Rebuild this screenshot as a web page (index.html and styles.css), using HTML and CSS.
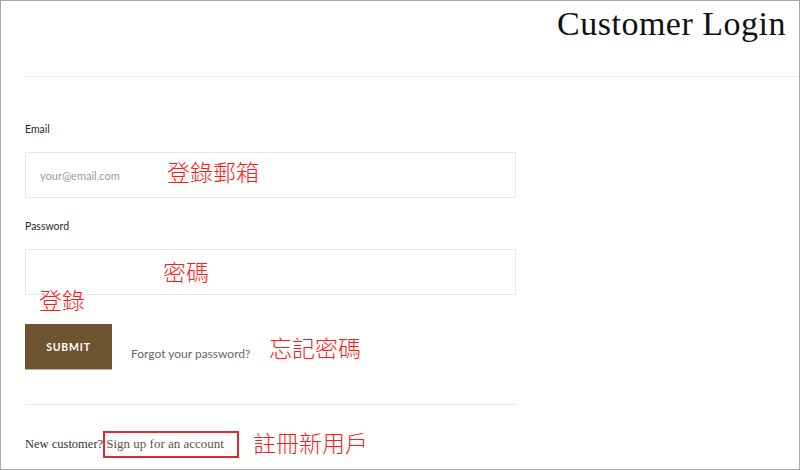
FILE: index.html
```html
<!DOCTYPE html>
<html lang="zh-Hant">
<head>
<meta charset="utf-8">
<title>Customer Login</title>
<link rel="stylesheet" href="styles.css">
</head>
<body>
<div class="page">
  <header class="head">
    <h1 class="title">Customer Login</h1>
  </header>
  <form class="form">
    <label class="lbl">Email</label>
    <div class="field"><input class="inp" type="email" placeholder="your@email.com"></div>
    <label class="lbl lbl-pw">Password</label>
    <div class="field"><input class="inp" type="password"></div>
    <div class="actions">
      <button class="btn" type="button">SUBMIT</button>
      <a class="forgot" href="#">Forgot your password?</a>
    </div>
    <hr class="rule">
    <p class="signup">New customer? <a class="signup-link" href="#">Sign up for an account</a></p>
  </form>

  <span class="note note-email">登錄郵箱</span>
  <span class="note note-pw">密碼</span>
  <span class="note note-login">登錄</span>
  <span class="note note-forgot">忘記密碼</span>
  <span class="note note-reg">註冊新用戶</span>
  <span class="mark"></span>
</div>
</body>
</html>
```
FILE: styles.css
```css
* { box-sizing: border-box; }
html, body { margin: 0; padding: 0; background: #fff; }

.page {
  position: relative;
  width: 800px;
  height: 470px;
  border: 1px solid #a8a8a8;
  overflow: hidden;
  font-family: Lato, "Open Sans", sans-serif;
}

.head {
  margin-left: 24px;
  height: 76px;
  border-bottom: 1px solid #ebebeb;
  display: flex;
  justify-content: flex-end;
  align-items: flex-start;
  padding: 3px 13px 0 0;
}
.title {
  margin: 0;
  font-family: "Liberation Serif", "DejaVu Serif", serif;
  font-weight: normal;
  font-size: 34px;
  line-height: 40px;
  letter-spacing: 0.5px;
  color: #111;
}

.form {
  width: 515px;
  padding: 45px 0 0 24px;
  margin: 0;
}
.lbl {
  display: block;
  font-size: 10.5px;
  line-height: 14px;
  color: #2a2a2a;
}
.lbl-pw { margin-top: 21px; }

.field { margin-top: 16px; }
.inp {
  display: block;
  width: 491px;
  height: 46px;
  border: 1px solid #e8e8e8;
  padding: 0 14px;
  font-family: Lato, "Open Sans", sans-serif;
  font-size: 11px;
  color: #333;
  outline: none;
  background: #fff;
}
.inp::placeholder { color: #9a9a9a; }

.actions {
  margin-top: 29px;
  display: flex;
  align-items: flex-start;
}
.btn {
  width: 87px;
  height: 46px;
  border: 0;
  border-bottom: 1px solid #c5b08a;
  background: #6d5330;
  color: #fff;
  font-family: Lato, "Open Sans", sans-serif;
  font-weight: 700;
  font-size: 10.5px;
  letter-spacing: 0.8px;
  padding: 0;
}
.forgot {
  align-self: flex-end;
  margin: 0 0 9px 19px;
  font-size: 12px;
  line-height: 15px;
  color: #666;
  text-decoration: none;
}

.rule {
  margin: 34px 0 0 0;
  border: 0;
  border-top: 1px solid #e8e8e8;
  height: 0;
}

.signup {
  margin: 31px 0 0 0;
  font-family: "Liberation Serif", "DejaVu Serif", serif;
  font-size: 12.5px;
  line-height: 16px;
  color: #333;
}
.signup-link {
  font-size: 13px;
  color: #5e5444;
  text-decoration: none;
}

.note {
  position: absolute;
  font-family: "Noto Sans CJK TC", "Noto Sans CJK SC", sans-serif;
  font-size: 23px;
  line-height: 23px;
  font-weight: 300;
  color: #ff1a1a;
  white-space: nowrap;
}
.note-email { left: 166px; top: 159px; }
.note-pw { left: 162px; top: 259px; }
.note-login { left: 38px; top: 287px; }
.note-forgot { left: 268px; top: 335px; }
.note-reg { left: 252px; top: 430px; }

.mark {
  position: absolute;
  left: 102px;
  top: 430px;
  width: 136px;
  height: 27px;
  border: 2px solid #e8262d;
}
```
